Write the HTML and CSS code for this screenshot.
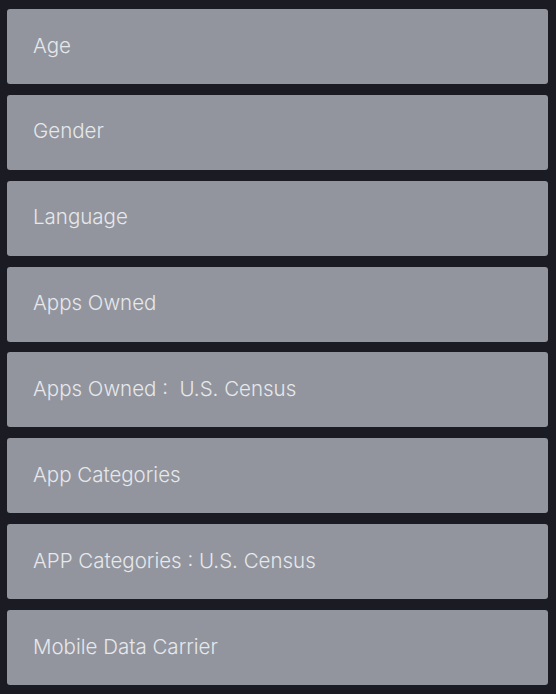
FILE: index.html
```html
<!DOCTYPE html>
<html>
<head>
<meta charset="utf-8">
<link rel="stylesheet" href="styles.css">
</head>
<body>
<div class="list">
  <div class="item">Age</div>
  <div class="item">Gender</div>
  <div class="item">Language</div>
  <div class="item">Apps Owned</div>
  <div class="item">Apps Owned :&nbsp; U.S. Census</div>
  <div class="item">App Categories</div>
  <div class="item">APP Categories : U.S. Census</div>
  <div class="item">Mobile Data Carrier</div>
</div>
</body>
</html>
```
FILE: styles.css
```css
html, body {
  margin: 0;
  padding: 0;
  background: #1b1b23;
}
.list {
  display: flex;
  flex-direction: column;
  gap: 10.86px;
  padding: 9px 8px 0 7px;
}
.item {
  height: 75px;
  box-sizing: border-box;
  background: #92959d;
  border-radius: 3px;
  display: flex;
  align-items: center;
  padding: 0 0 3px 26px;
  font-family: "Inter", sans-serif;
  font-weight: 300;
  font-size: 20.5px;
  color: #e6e8ec;
}
```
